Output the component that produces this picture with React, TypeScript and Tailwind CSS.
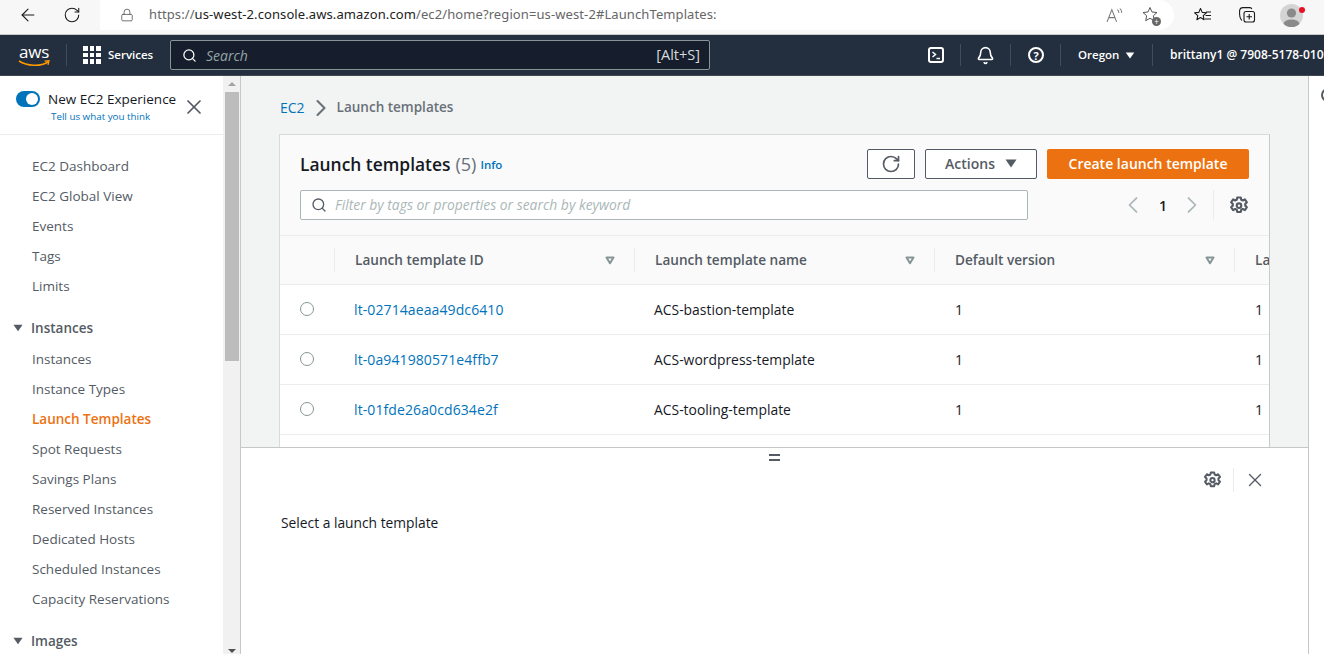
import React from "react";
import { ArrowLeft, RotateCw, Lock, Search, ChevronRight, ChevronLeft, X, Bell } from "lucide-react";

const font = { fontFamily: '"Open Sans", "Noto Sans", sans-serif' };

function Gear({ size = 18 }: { size?: number }) {
  return (
    <svg width={size} height={size} viewBox="0 0 16 16" fill="none" stroke="#545b64" strokeWidth="1.7">
      <path d="M6.6 1.2h2.8l.4 1.8 1.3.6 1.6-.9 1.6 2.3-1.3 1.3v1.4l1.3 1.3-1.6 2.3-1.6-.9-1.3.6-.4 1.8H6.6l-.4-1.8-1.3-.6-1.6.9-1.6-2.3 1.3-1.3V6.3L1.7 5l1.6-2.3 1.6.9L6.2 3z" strokeLinejoin="round" />
      <circle cx="8" cy="7.7" r="1.8" />
    </svg>
  );
}

function FilterCaret() {
  return (
    <svg width="10" height="9" viewBox="0 0 10 9" fill="none" stroke="#879596" strokeWidth="2">
      <path d="M1.5 1.5h7L5 7.2z" strokeLinejoin="round" />
    </svg>
  );
}

function Caret({ color = "#545b64", w = 12, h = 9 }: { color?: string; w?: number; h?: number }) {
  return (
    <svg width={w} height={h} viewBox="0 0 12 9">
      <path d="M0.5 0.5h11L6 8.5z" fill={color} />
    </svg>
  );
}

function Divider() {
  return <div className="h-[22px] w-px bg-[#414d5c]" />;
}

function Chrome() {
  return (
    <div className="flex h-[35px] shrink-0 items-start border-b border-[#c8c8c8] bg-[#f7f7f7]">
      <div className="flex h-[30px] w-[100px] items-center pl-[18px]">
        <ArrowLeft size={20} strokeWidth={1.3} color="#1a1a1a" />
        <RotateCw size={18} strokeWidth={1.4} color="#1a1a1a" className="ml-[25px]" />
      </div>
      <div className="flex h-[30px] w-[1074px] items-center rounded-r-full rounded-bl-[18px] bg-white pl-[20px] pr-[14px]">
        <Lock size={14} strokeWidth={1.4} color="#555" />
        <span className="ml-[15px] text-[13px] tracking-[0.1px] text-[#666]" style={{ fontFamily: '"Noto Sans", sans-serif' }}>
          https://<span className="text-[#222]">us-west-2.console.aws.amazon.com</span>/ec2/home?region=us-west-2#LaunchTemplates:
        </span>
        <div className="ml-auto flex items-center gap-[19px]">
          <svg width="17" height="17" viewBox="0 0 16 16" fill="none" stroke="#777" strokeWidth="1">
            <path d="M1 14 5.5 2.5 10 14M2.8 10h5.6M10.5 2.5c1.3.7 1.7 1.7 1.6 3M13 1.5c1.5 1 2 2.4 1.8 4" />
          </svg>
          <span className="relative block h-[18px] w-[18px]">
            <svg width="17" height="17" viewBox="0 0 17 17" fill="none" stroke="#555" strokeWidth="1">
              <path d="M8 1.5l2 4.5 5 .5-3.7 3.3 1 4.9L8 12.3l-4.3 2.4 1-4.9L1 6.5 6 6z" strokeLinejoin="round" />
            </svg>
            <span className="absolute right-[-1px] bottom-[-2px] flex h-[9px] w-[9px] items-center justify-center rounded-full bg-[#666] text-[8px] leading-none text-white">+</span>
          </span>
        </div>
      </div>
      <div className="flex h-[30px] flex-1 items-center pl-[20px]">
        <svg width="18" height="16" viewBox="0 0 18 16" fill="none" stroke="#1a1a1a" strokeWidth="1.1">
          <path d="M6.5 1.5l1.7 3.9 4.2.4-3.2 2.8.9 4.1-3.6-2.1-3.6 2.1.9-4.1L.6 5.8l4.2-.4zM12 5h5M11.5 8.5H17M11 12h6" strokeLinejoin="round" />
        </svg>
        <svg width="18" height="18" viewBox="0 0 18 18" fill="none" stroke="#1a1a1a" strokeWidth="1.1" className="ml-[26px]">
          <path d="M4 14.5C2 13 1.2 11 1.6 4.5 2 2 3.5 1.6 5 1.6h7c1 0 1.500.500 1.800 1.400" />
          <rect x="6" y="5.500" width="10.500" height="10.500" rx="2" />
          <path d="M11.200 8v5.500M8.500 10.800H14" />
        </svg>
        <span className="relative ml-[24px] flex h-[23px] w-[23px] items-center justify-center overflow-hidden rounded-full bg-[#d4d4d4]">
          <svg width="23" height="23" viewBox="0 0 23 23">
            <circle cx="11.500" cy="9" r="4.600" fill="#8a8a8a" />
            <ellipse cx="11.500" cy="20" rx="8" ry="4.500" fill="#8a8a8a" />
          </svg>
        </span>
        <span className="relative left-[-4px] top-[-5px] h-[6px] w-[6px] rounded-full bg-[#e81123]" />
      </div>
    </div>
  );
}

function TopNav() {
  return (
    <div className="flex h-[41px] shrink-0 items-center overflow-hidden whitespace-nowrap border-b border-[#414750] bg-[#232f3e] text-[12px] font-semibold text-white" style={font}>
      <div className="flex w-[66px] shrink-0 flex-col items-center pl-[2px]">
        <span className="h-[17px] text-[17px] font-normal leading-[15px] tracking-[-0.2px]">aws</span>
        <svg width="32" height="7" viewBox="0 0 32 7" fill="none" className="-mt-px">
          <path d="M1 1c8 5 21 6 29 1" stroke="#ff9900" strokeWidth="1.600" />
          <path d="M26.500 1.200 31 .8l-1 4" stroke="#ff9900" strokeWidth="1.300" />
        </svg>
      </div>
      <div className="h-[22px] w-px shrink-0 bg-[#414d5c]" />
      <div className="ml-[16px] grid shrink-0 grid-cols-3 gap-[2px]">
        {Array.from({ length: 9 }).map((_, i) => (
          <span key={i} className="block h-[4.500px] w-[4.500px] bg-white" />
        ))}
      </div>
      <span className="ml-[7.500px] w-[62px] shrink-0 text-[11.500px]">Services</span>
      <div className="flex h-[30px] w-[540px] shrink-0 items-center rounded-[2px] border border-[#879596] bg-[#161e2d] pl-[11px] pr-[9px]">
        <Search size={15} strokeWidth={2} color="#fff" />
        <span className="ml-[9px] text-[14px] font-normal italic text-[#95a5a6]">Search</span>
        <span className="ml-auto text-[14.500px] font-normal text-[#d5dbdb]">[Alt+S]</span>
      </div>
      <div className="ml-[218px] flex h-[16px] w-[16px] shrink-0 items-center justify-center rounded-[3px] border-2 border-white">
        <svg width="12" height="12" viewBox="0 0 12 12" fill="none" stroke="#fff" strokeWidth="1.500">
          <path d="M2.500 3l3 2.500-3 2.500M6.500 9.500H10" />
        </svg>
      </div>
      <div className="ml-[16px] shrink-0"><Divider /></div>
      <Bell size={19} strokeWidth={2} color="#fff" className="ml-[15px] shrink-0" />
      <div className="ml-[15px] shrink-0"><Divider /></div>
      <div className="ml-[17px] flex h-[16px] w-[16px] shrink-0 items-center justify-center rounded-full border-2 border-white text-[11px] font-bold leading-none">?</div>
      <div className="ml-[16px] shrink-0"><Divider /></div>
      <span className="ml-[17px] w-[42px] shrink-0 text-[11.500px]">Oregon</span>
      <span className="ml-[5px] shrink-0"><Caret color="#fff" w={10} h={7} /></span>
      <div className="ml-[17px] shrink-0"><Divider /></div>
      <span className="ml-[17px] shrink-0">brittany1 @ 7908-5178-0100</span>
    </div>
  );
}

const group1 = ["EC2 Dashboard", "EC2 Global View", "Events", "Tags", "Limits"];
const group2 = ["Instances", "Instance Types", "Launch Templates", "Spot Requests", "Savings Plans", "Reserved Instances", "Dedicated Hosts", "Scheduled Instances", "Capacity Reservations"];

function NavItem({ label }: { label: string }) {
  const active = label === "Launch Templates";
  return (
    <div className={`flex h-[30px] items-center pl-[32px] text-[13.500px] ${active ? "font-semibold text-[#ec7211]" : "text-[#545b64]"}`}>
      {label}
    </div>
  );
}

function NavHeading({ label }: { label: string }) {
  return (
    <div className="flex h-[30px] items-center pl-[13px] text-[13.500px] font-semibold text-[#545b64]">
      <Caret w={10} h={8} />
      <span className="ml-[8px]">{label}</span>
    </div>
  );
}

function Sidebar() {
  return (
    <div className="h-full w-[223px] shrink-0 overflow-hidden bg-white" style={font}>
      <div className="flex h-[59px] border-b border-[#eaeded] pl-[16px]">
        <div className="mt-[15px] flex h-[16px] w-[24px] items-center justify-end rounded-full bg-[#0073bb] pr-[2px]">
          <span className="h-[12px] w-[12px] rounded-full bg-white" />
        </div>
        <div className="ml-[8px] flex flex-col">
          <span className="mt-[13px] h-[20px] text-[13.500px] leading-[20px] text-[#16191f]">New EC2 Experience</span>
          <span className="ml-[3px] mt-px text-[9.800px] leading-[14px] text-[#0073bb]">Tell us what you think</span>
        </div>
        <X size={24} strokeWidth={1.700} color="#545b64" className="ml-[6px] mt-[19px]" />
      </div>
      <div className="pt-[16px]">
        {group1.map((l) => <NavItem key={l} label={l} />)}
      </div>
      <div className="mt-[12px]">
        <NavHeading label="Instances" />
        <div className="pt-[1px]">
          {group2.map((l) => <NavItem key={l} label={l} />)}
        </div>
      </div>
      <div className="mt-[12px]"><NavHeading label="Images" /></div>
    </div>
  );
}

function Scrollbar() {
  return (
    <div className="flex h-full w-[17px] shrink-0 flex-col items-center border-r-0 bg-[#f1f1f1]">
      <span className="mt-[6px] h-0 w-0 border-x-[4px] border-b-[4px] border-x-transparent border-b-[#a3a3a3]" />
      <div className="mt-[6px] h-[269px] w-[14px] bg-[#bcbcbc]" />
      <span className="mt-auto mb-[1px] h-0 w-0 border-x-[4px] border-t-[4px] border-x-transparent border-t-[#505050]" />
    </div>
  );
}

const rows = [
  ["lt-02714aeaa49dc6410", "ACS-bastion-template"],
  ["lt-0a941980571e4ffb7", "ACS-wordpress-template"],
  ["lt-01fde26a0cd634e2f", "ACS-tooling-template"],
];

function HeaderCell({ label, width }: { label: string; width: string }) {
  return (
    <div className={`flex h-[24px] shrink-0 items-center border-l border-[#eaeded] pl-[20px] pr-[19px] text-[13.600px] font-semibold text-[#545b64] ${width}`}>
      <span>{label}</span>
      <span className="ml-auto"><FilterCaret /></span>
    </div>
  );
}

function Card() {
  return (
    <div className="ml-[38px] mt-[17px] w-[991px] shrink-0 border-x border-t border-[#d5dbdb] border-r-[#c4cbcb] bg-white">
      <div className="h-[101px] border-b border-[#eaeded] bg-[#fafafa] pl-[20px] pr-[20px]">
        <div className="flex items-center pt-[14px]">
          <span className="text-[17.400px] font-semibold leading-[30px] text-[#16191f]">Launch templates</span>
          <span className="ml-[5px] text-[18px] leading-[30px] text-[#687078]">(5)</span>
          <span className="ml-[4px] mt-[2px] text-[11.500px] font-semibold text-[#0073bb]">Info</span>
          <div className="ml-auto flex gap-[10px]">
            <button className="flex h-[30px] w-[112px] order-2 items-center justify-center rounded-[2px] border border-[#545b64] bg-white pb-px text-[14px] font-semibold text-[#545b64]">
              Actions
              <span className="ml-[10px]"><Caret /></span>
            </button>
            <button className="order-1 flex h-[30px] w-[48px] items-center justify-center rounded-[2px] border border-[#545b64] bg-white">
              <RotateCw size={20} strokeWidth={2} color="#545b64" />
            </button>
            <button className="order-3 flex h-[30px] w-[202px] items-center justify-center rounded-[2px] bg-[#ec7211] pb-[2px] text-[14px] font-semibold text-white">
              Create launch template
            </button>
          </div>
        </div>
        <div className="mt-[11px] flex items-center">
          <div className="flex h-[30px] w-[729px] items-center rounded-[2px] border border-[#aab7b8] bg-white pl-[10px]">
            <Search size={16} strokeWidth={2} color="#545b64" />
            <span className="ml-[8px] text-[13.900px] italic text-[#aab7b8]">Filter by tags or properties or search by keyword</span>
          </div>
          <ChevronLeft size={28} strokeWidth={1.500} color="#aab7b8" className="ml-[91px]" />
          <span className="ml-[12px] text-[14px] font-semibold text-[#16191f]">1</span>
          <ChevronRight size={28} strokeWidth={1.500} color="#aab7b8" className="ml-[11px]" />
          <div className="ml-[7px] h-[30px] w-px bg-[#eaeded]" />
          <span className="ml-[15px] mt-[2px]"><Gear size={20} /></span>
        </div>
      </div>
      <div className="flex h-[49px] items-center overflow-hidden border-b border-[#eaeded] bg-[#fafafa]">
        <div className="w-[54px] shrink-0" />
        <HeaderCell label="Launch template ID" width="w-[300px]" />
        <HeaderCell label="Launch template name" width="w-[300px]" />
        <HeaderCell label="Default version" width="w-[300px]" />
        <div className="flex h-[24px] shrink-0 items-center border-l border-[#eaeded] pl-[20px] text-[13.600px] font-semibold text-[#545b64]">Latest version</div>
      </div>
      {rows.map(([id, name]) => (
        <div key={id} className="flex h-[50px] items-center overflow-hidden border-b border-[#eaeded] text-[14px] text-[#16191f]">
          <div className="flex w-[54px] shrink-0 pl-[20px]">
            <span className="mb-[2px] h-[14px] w-[14px] rounded-full border border-[#879596] bg-white" />
          </div>
          <div className="w-[300px] shrink-0 pl-[20px] tracking-[0.1px] text-[#0073bb]">{id}</div>
          <div className="w-[301px] shrink-0 pl-[20px] pt-[2px] text-[13.900px]">{name}</div>
          <div className="w-[300px] shrink-0 pl-[20px]">1</div>
          <div className="pl-[20px]">1</div>
        </div>
      ))}
      <div className="h-[30px]" />
    </div>
  );
}

function SplitPanel() {
  return (
    <div className="relative h-[207px] shrink-0 border-t border-[#c4c8c8] bg-white" style={font}>
      <div className="absolute left-[528px] top-[6px] flex flex-col gap-[3px]">
        <span className="block h-[2px] w-[11px] bg-[#545b64]" />
        <span className="block h-[2px] w-[11px] bg-[#545b64]" />
      </div>
      <div className="flex items-center justify-end pr-[42px] pt-[20px]">
        <Gear size={19} />
        <div className="ml-[11px] h-[24px] w-px bg-[#eaeded]" />
        <X size={22} strokeWidth={1.500} color="#545b64" className="ml-[10px]" />
      </div>
      <div className="mt-[21px] pl-[40px] text-[13.800px] leading-[20px] text-[#16191f]">Select a launch template</div>
    </div>
  );
}

export default function App() {
  return (
    <div className="flex h-[654px] w-[1324px] flex-col overflow-hidden bg-white">
      <Chrome />
      <TopNav />
      <div className="flex min-h-0 flex-1">
        <Sidebar />
        <Scrollbar />
        <div className="flex h-full w-[1069px] shrink-0 flex-col border-x border-[#c4c8c8]" style={font}>
          <div className="flex min-h-0 flex-1 flex-col overflow-hidden bg-[#f2f3f3]">
            <div className="flex h-[41px] shrink-0 items-center pl-[39px] pt-[22px] text-[14px]">
              <span className="text-[#0073bb]">EC2</span>
              <ChevronRight size={28} strokeWidth={1.800} color="#687078" className="ml-[2px] mr-[2px]" />
              <span className="text-[13.500px] font-semibold text-[#687078]">Launch templates</span>
            </div>
            <Card />
          </div>
          <SplitPanel />
        </div>
        <div className="min-w-0 flex-1 overflow-hidden bg-white pl-[12px] pt-[12px]">
          <span className="block h-[14px] w-[14px] rounded-full border-2 border-[#545b64]" />
        </div>
      </div>
    </div>
  );
}
